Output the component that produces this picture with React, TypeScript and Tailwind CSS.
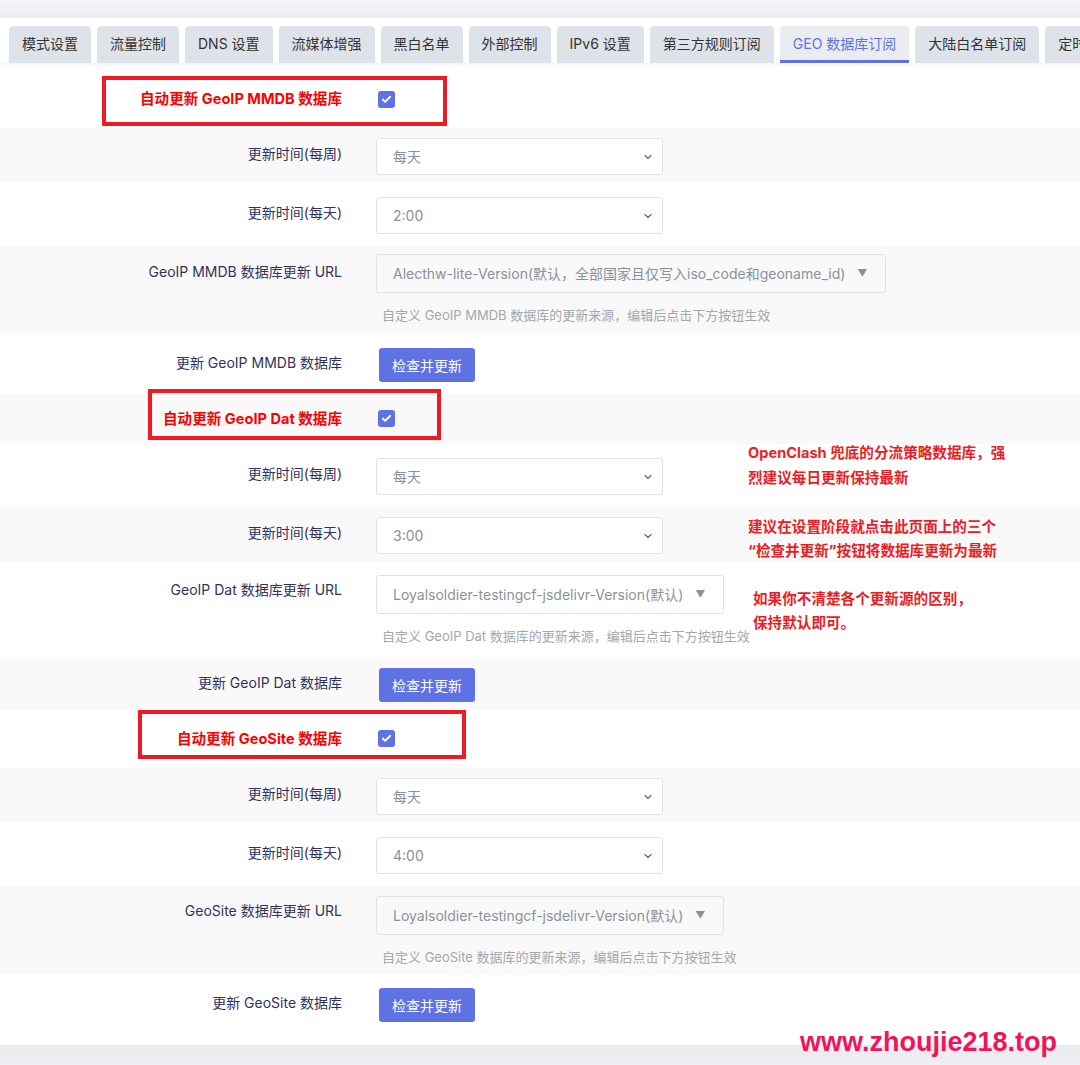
import React from 'react';
import { ChevronDown, Check } from 'lucide-react';

const tabs = [
  '模式设置',
  '流量控制',
  'DNS 设置',
  '流媒体增强',
  '黑白名单',
  '外部控制',
  'IPv6 设置',
  '第三方规则订阅',
  'GEO 数据库订阅',
  '大陆白名单订阅',
  '定时重启',
];

const font = { fontFamily: 'Inter, "Noto Sans CJK SC", sans-serif' };

function Label({ children, className = 'pt-[6px]' }: { children: React.ReactNode; className?: string }) {
  return (
    <div className={`w-[342px] shrink-0 text-right text-[14px] leading-[20px] text-[#32325d] ${className}`}>
      {children}
    </div>
  );
}

function RedLabel({ children }: { children: React.ReactNode }) {
  return (
    <div className="w-[342px] shrink-0 text-right text-[14.6px] font-bold leading-[20px] text-[#ff0000]">
      {children}
    </div>
  );
}

function Checkbox() {
  return (
    <div className="ml-[36px] flex h-[17px] w-[17px] items-center justify-center rounded-[3px] bg-[#5e72e4]">
      <Check className="h-[11px] w-[11px] text-white" strokeWidth={4} />
    </div>
  );
}

function Select({ value }: { value: string }) {
  return (
    <div className="flex h-[37px] w-[287px] items-center justify-between rounded-[3px] border border-[#dfe2e8] bg-white pl-[16px] pr-[8px] text-[14px] text-[#8a919b]">
      <span>{value}</span>
      <ChevronDown className="h-[12px] w-[12px] text-[#777]" strokeWidth={3} />
    </div>
  );
}

function Dropdown({ value }: { value: string }) {
  return (
    <div className="inline-flex h-[39px] items-center rounded-[3px] border border-[#dfe2e8] pl-[16px] pr-[18px] text-[14px] text-[#8a919b]">
      <span>{value}</span>
      <span className="ml-[12px] text-[10px] text-[#8a919b]">▼</span>
    </div>
  );
}

function Hint({ children }: { children: React.ReactNode }) {
  return <div className="mt-[13px] pl-[6px] text-[13px] leading-[18px] text-[#a3a7ae]">{children}</div>;
}

function UpdateButton() {
  return (
    <button className="ml-[3px] h-[34px] rounded-[3px] bg-[#5e72e4] px-[13px] text-[14px] text-white">
      检查并更新
    </button>
  );
}

export default function App() {
  return (
    <div className="relative w-[1080px] overflow-hidden bg-white" style={font}>
      <div className="h-[18px] bg-gradient-to-b from-[#f4f5f7] to-[#eceef1]" />

      <div className="relative z-10 flex gap-[6px] overflow-hidden whitespace-nowrap bg-white pl-[9px] pt-[8px] shadow-[0_3px_3px_rgba(0,0,0,0.04)]">
        {tabs.map((t) => {
          const active = t === 'GEO 数据库订阅';
          return (
            <div
              key={t}
              className={`flex h-[37px] shrink-0 items-center rounded-t-[4px] px-[13px] text-[14px] ${
                active
                  ? 'border-b-[3px] border-[#5e72e4] bg-[#e9ecf1] pt-[1px] text-[#5e72e4]'
                  : 'bg-[#dee3ea] pb-[3px] text-[#333]'
              }`}
            >
              {t}
            </div>
          );
        })}
      </div>

      {/* GeoIP MMDB */}
      <div className="relative flex h-[65px] items-center bg-white pt-[7px]">
        <div className="absolute left-[102px] top-[13px] h-[50px] w-[345px] border-4 border-[#ed1c24]" />
        <RedLabel>自动更新 GeoIP MMDB 数据库</RedLabel>
        <Checkbox />
      </div>
      <div className="flex h-[55px] items-start bg-[#f9f9f9] pt-[10px]">
        <Label>更新时间(每周)</Label>
        <div className="ml-[34px]"><Select value="每天" /></div>
      </div>
      <div className="flex h-[63px] items-start bg-white pt-[14px]">
        <Label>更新时间(每天)</Label>
        <div className="ml-[34px]"><Select value="2:00" /></div>
      </div>
      <div className="flex h-[88px] items-start bg-[#f9f9f9] pt-[8px]">
        <Label className="pt-[8px]">GeoIP MMDB 数据库更新 URL</Label>
        <div className="ml-[34px]">
          <Dropdown value="Alecthw-lite-Version(默认，全部国家且仅写入iso_code和geoname_id)" />
          <Hint>自定义 GeoIP MMDB 数据库的更新来源，编辑后点击下方按钮生效</Hint>
        </div>
      </div>
      <div className="flex h-[59px] items-start bg-white pt-[14px]">
        <Label className="pt-[5px]">更新 GeoIP MMDB 数据库</Label>
        <div className="ml-[34px]"><UpdateButton /></div>
      </div>

      {/* GeoIP Dat */}
      <div className="relative flex h-[51px] items-center bg-[#f9f9f9]">
        <div className="absolute left-[148px] top-[-4px] z-10 h-[51px] w-[293px] border-4 border-[#ed1c24]" />
        <RedLabel>自动更新 GeoIP Dat 数据库</RedLabel>
        <Checkbox />
      </div>
      <div className="flex h-[62px] items-start bg-white pt-[14px]">
        <Label>更新时间(每周)</Label>
        <div className="ml-[34px]"><Select value="每天" /></div>
      </div>
      <div className="flex h-[56px] items-start bg-[#f9f9f9] pt-[11px]">
        <Label>更新时间(每天)</Label>
        <div className="ml-[34px]"><Select value="3:00" /></div>
      </div>
      <div className="flex h-[96px] items-start bg-white pt-[13px]">
        <Label className="pt-[5px]">GeoIP Dat 数据库更新 URL</Label>
        <div className="ml-[34px]">
          <Dropdown value="Loyalsoldier-testingcf-jsdelivr-Version(默认)" />
          <Hint>自定义 GeoIP Dat 数据库的更新来源，编辑后点击下方按钮生效</Hint>
        </div>
      </div>
      <div className="flex h-[51px] items-start bg-[#f9f9f9] pt-[10px]">
        <Label className="pt-[5px]">更新 GeoIP Dat 数据库</Label>
        <div className="ml-[34px]"><UpdateButton /></div>
      </div>

      {/* GeoSite */}
      <div className="relative flex h-[59px] items-center bg-white">
        <div className="absolute left-[138px] top-[1px] h-[49px] w-[328px] border-4 border-[#ed1c24]" />
        <RedLabel>自动更新 GeoSite 数据库</RedLabel>
        <Checkbox />
      </div>
      <div className="flex h-[55px] items-start bg-[#f9f9f9] pt-[10px]">
        <Label>更新时间(每周)</Label>
        <div className="ml-[34px]"><Select value="每天" /></div>
      </div>
      <div className="flex h-[63px] items-start bg-white pt-[14px]">
        <Label>更新时间(每天)</Label>
        <div className="ml-[34px]"><Select value="4:00" /></div>
      </div>
      <div className="flex h-[89px] items-start bg-[#f9f9f9] pt-[10px]">
        <Label className="pt-[5px]">GeoSite 数据库更新 URL</Label>
        <div className="ml-[34px]">
          <Dropdown value="Loyalsoldier-testingcf-jsdelivr-Version(默认)" />
          <Hint>自定义 GeoSite 数据库的更新来源，编辑后点击下方按钮生效</Hint>
        </div>
      </div>
      <div className="flex h-[70px] items-start bg-white pt-[13px]">
        <Label className="pt-[5px]">更新 GeoSite 数据库</Label>
        <div className="ml-[34px]"><UpdateButton /></div>
      </div>
      <div className="h-[20px] bg-gradient-to-b from-[#e9ebee] to-[#eef0f3]" />

      {/* annotations */}
      <div className="absolute left-[748px] top-[441px] text-[14.6px] font-bold leading-[25px] text-[#ed1c24]">
        <div>OpenClash 兜底的分流策略数据库，强</div>
        <div>烈建议每日更新保持最新</div>
      </div>
      <div className="absolute left-[748px] top-[515px] text-[14.6px] font-bold leading-[24px] text-[#ed1c24]">
        <div>建议在设置阶段就点击此页面上的三个</div>
        <div>“检查并更新”按钮将数据库更新为最新</div>
      </div>
      <div className="absolute left-[753px] top-[587px] text-[14.6px] font-bold leading-[24px] text-[#ed1c24]">
        <div>如果你不清楚各个更新源的区别，</div>
        <div>保持默认即可。</div>
      </div>
      <div
        className="absolute left-[800px] top-[1026px] whitespace-nowrap text-[27px] font-bold leading-[32px] text-[#f0145a]"
        style={{ fontFamily: '"Liberation Sans", sans-serif' }}
      >
        www.zhoujie218.top
      </div>
    </div>
  );
}
